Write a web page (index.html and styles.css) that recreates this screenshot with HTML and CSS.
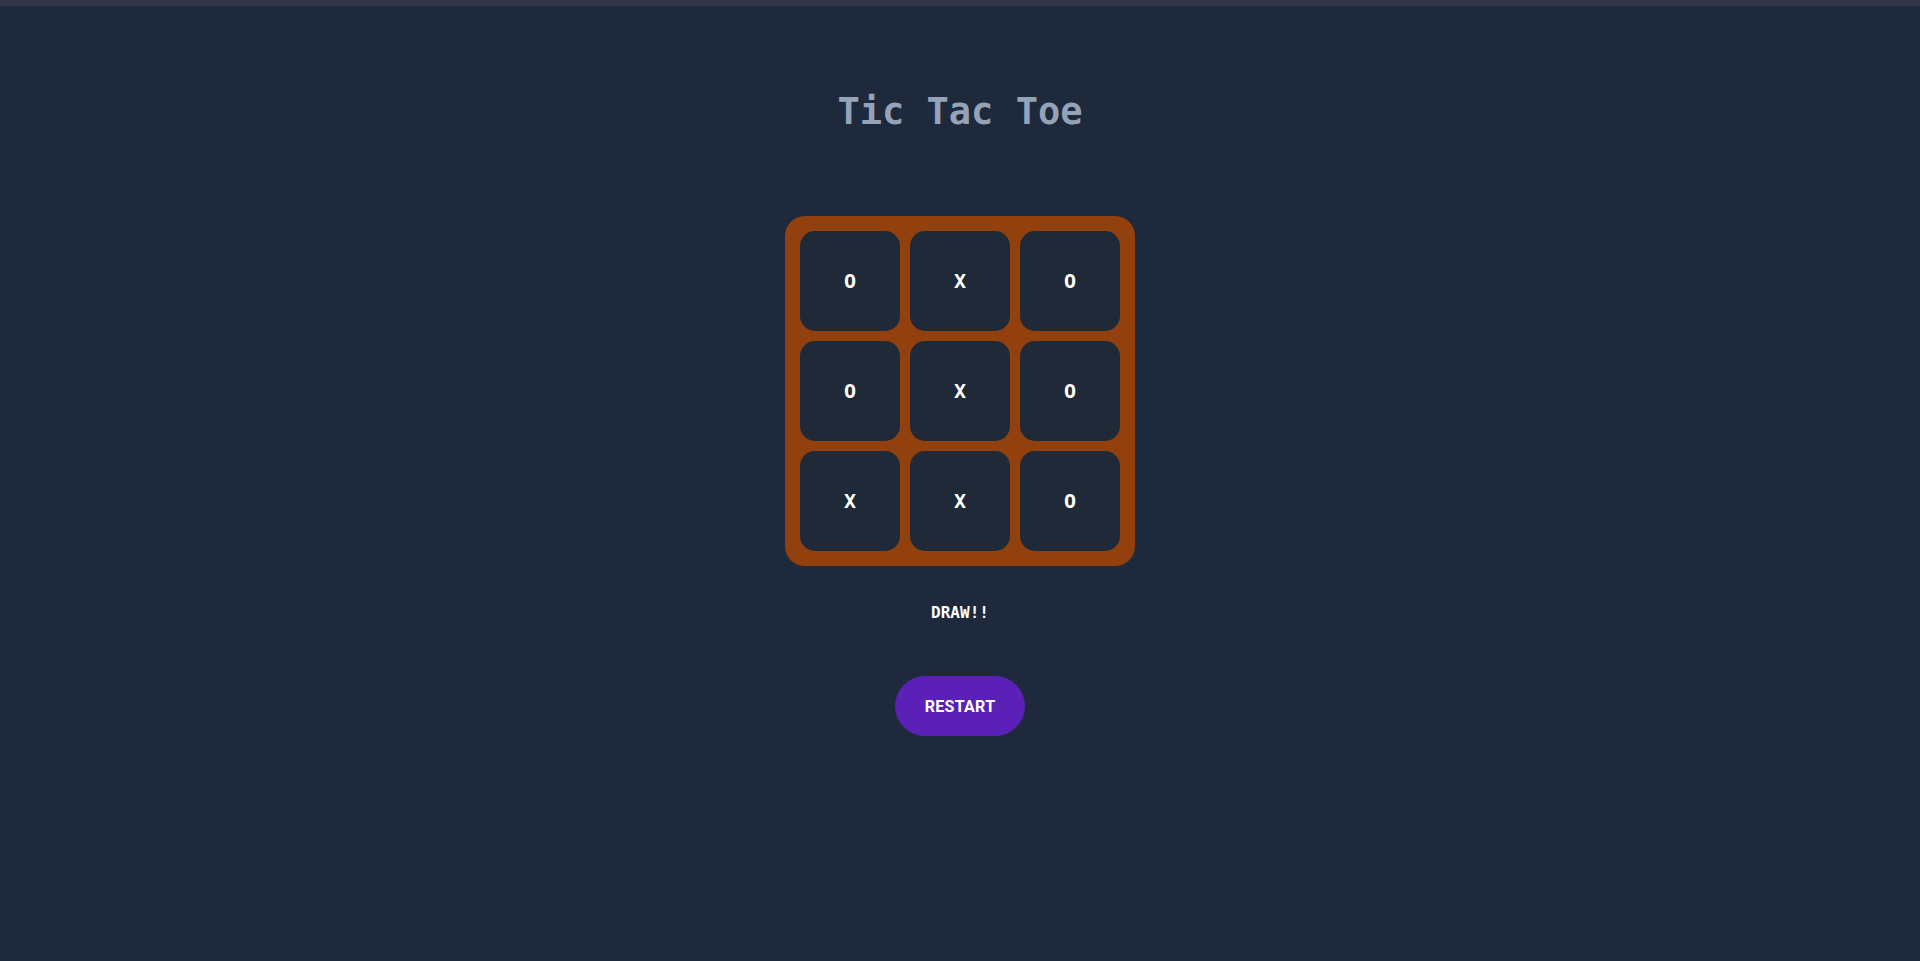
FILE: index.html
```html
<!DOCTYPE html>
<html>
<head>
<meta charset="utf-8">
<link rel="stylesheet" href="styles.css">
</head>
<body>
<div class="topbar"></div>
<main class="game">
  <h1 class="title">Tic Tac Toe</h1>
  <div class="board">
    <div class="cell">O</div>
    <div class="cell">X</div>
    <div class="cell">O</div>
    <div class="cell">O</div>
    <div class="cell">X</div>
    <div class="cell">O</div>
    <div class="cell">X</div>
    <div class="cell">X</div>
    <div class="cell">O</div>
  </div>
  <p class="status">DRAW!!</p>
  <button class="restart">RESTART</button>
</main>
</body>
</html>
```

FILE: styles.css
```css
html, body {
  margin: 0;
  padding: 0;
  height: 100%;
}
body {
  background: #1e293b;
  font-family: "DejaVu Sans Mono", monospace;
  overflow: hidden;
}
.topbar {
  height: 6px;
  background: #323548;
}
.game {
  display: flex;
  flex-direction: column;
  align-items: center;
  padding-top: 84px;
}
.title {
  margin: 0;
  font-size: 37px;
  line-height: 44px;
  font-weight: bold;
  color: #94a3b8;
  font-family: "DejaVu Sans Mono", monospace;
}
.board {
  margin-top: 82px;
  display: grid;
  grid-template-columns: repeat(3, 100px);
  grid-template-rows: repeat(3, 100px);
  gap: 10px;
  padding: 15px;
  background: #92400e;
  border-radius: 20px;
}
.cell {
  background: #1f2937;
  border-radius: 15px;
  display: flex;
  align-items: center;
  justify-content: center;
  color: #ffffff;
  font-weight: bold;
  font-size: 20px;
}
.status {
  margin: 37px 0 0;
  font-size: 16px;
  line-height: 19px;
  font-weight: bold;
  color: #ffffff;
}
.restart {
  margin-top: 54px;
  width: 130px;
  height: 60px;
  border: none;
  border-radius: 30px;
  background: #5b21b6;
  color: #ffffff;
  font-family: Roboto, "Liberation Sans", sans-serif;
  font-weight: bold;
  font-size: 16px;
  letter-spacing: 0.3px;
  padding: 0;
}
```
